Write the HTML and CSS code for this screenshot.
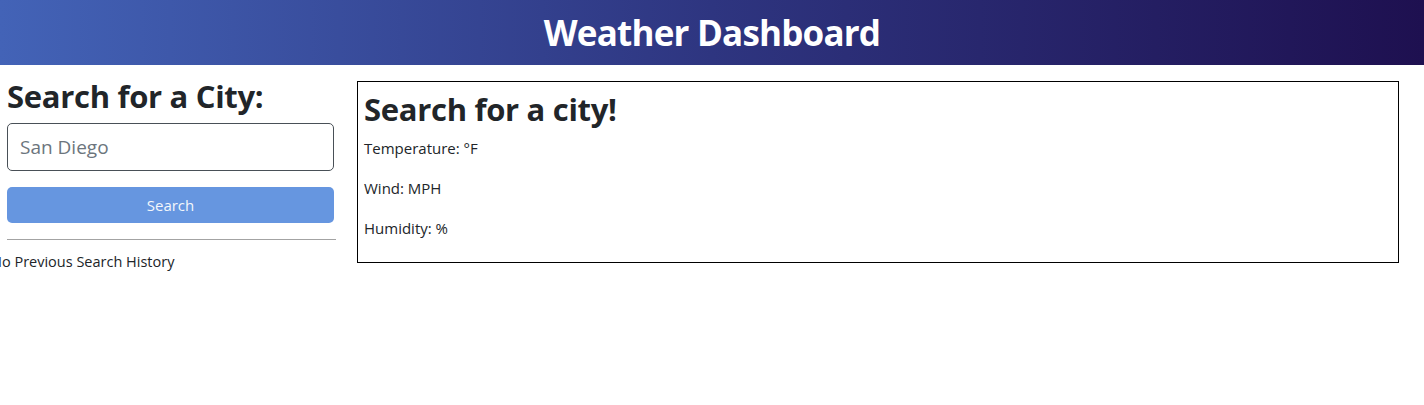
FILE: index.html
```html
<!DOCTYPE html>
<html lang="en">
<head>
<meta charset="utf-8">
<title>Weather Dashboard</title>
<link rel="stylesheet" href="styles.css">
</head>
<body>
<header class="site-header">
  <h1 class="site-title">Weather Dashboard</h1>
</header>
<main class="layout">
  <aside class="sidebar">
    <h2 class="section-title">Search for a City:</h2>
    <input class="city-input" type="text" placeholder="San Diego">
    <button class="search-btn" type="button">Search</button>
    <hr class="divider">
    <p class="history">No Previous Search History</p>
  </aside>
  <section class="current">
    <h2 class="section-title">Search for a city!</h2>
    <p class="stat">Temperature: °F</p>
    <p class="stat">Wind: MPH</p>
    <p class="stat">Humidity: %</p>
  </section>
</main>
</body>
</html>
```
FILE: styles.css
```css
* { box-sizing: border-box; }

body {
  margin: 0;
  font-family: "Open Sans", "Noto Sans", sans-serif;
  font-size: 16px;
  line-height: 1.5;
  color: #212529;
  background: #fff;
}

.site-header {
  height: 65px;
  display: flex;
  align-items: center;
  justify-content: center;
  background: linear-gradient(to right, #4363b7, #2e3580 50%, #1e1050);
}

.site-title {
  margin: 0;
  color: #fff;
  font-size: 35px;
  font-weight: 700;
  line-height: 1.2;
  letter-spacing: -0.8px;
}

.layout {
  display: flex;
  align-items: flex-start;
  gap: 21px;
  padding: 0 25px 0 7px;
}

.sidebar {
  width: 329px;
  flex: none;
  padding-top: 13px;
}

.section-title {
  margin: 0 0 8px;
  font-size: 31px;
  font-weight: 700;
  line-height: 1.2;
  color: #212529;
  letter-spacing: -0.3px;
}

.city-input {
  display: block;
  width: 327px;
  height: 48px;
  padding: 8px 12px;
  border: 1px solid #495057;
  border-radius: 5px;
  font-family: inherit;
  font-size: 19px;
  color: #212529;
  margin: 0 0 16px;
}

.city-input::placeholder {
  color: #6c757d;
}

.search-btn {
  display: block;
  width: 327px;
  height: 36px;
  border: none;
  border-radius: 5px;
  background: #6696e0;
  color: #f3f6fb;
  font-family: inherit;
  font-size: 15px;
  cursor: pointer;
}

.divider {
  margin: 16px 0 11px;
  width: 329px;
  border: 0;
  border-top: 1px solid #a3a3a3;
}

.history {
  margin: 0 0 0 -16px;
  font-size: 14.5px;
}

.current {
  flex: 1;
  margin-top: 16px;
  border: 1px solid #000;
  padding: 9px 6px 6px;
}

.stat {
  margin: 0 0 16px;
  font-size: 15px;
  line-height: 24px;
}
```
